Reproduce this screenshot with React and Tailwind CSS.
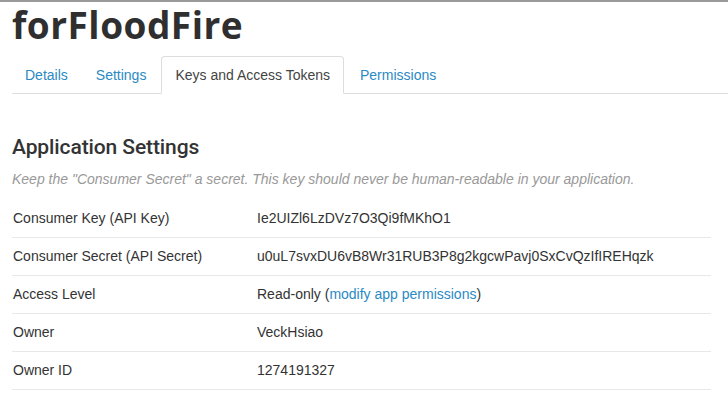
import React from "react";

const rows = [
  ["Consumer Key (API Key)", "Ie2UIZl6LzDVz7O3Qi9fMKhO1"],
  ["Consumer Secret (API Secret)", "u0uL7svxDU6vB8Wr31RUB3P8g2kgcwPavj0SxCvQzIfIREHqzk"],
  ["Access Level", null],
  ["Owner", "VeckHsiao"],
  ["Owner ID", "1274191327"],
];

export default function App() {
  return (
    <div
      className="w-[728px] h-[412px] overflow-hidden bg-white text-[#333]"
      style={{ fontFamily: '"Liberation Sans", Arial, sans-serif' }}
    >
      <div className="h-[2px] bg-[#9a9a9a]" />
      <div className="pl-[12px]">
        <h1
          className="text-[37px] leading-[44px] font-bold tracking-[0.5px] text-[#2f2f2f] mt-[1px]"
          style={{ fontFamily: '"Open Sans", "Liberation Sans", sans-serif' }}
        >
          forFloodFire
        </h1>
        <ul className="flex mt-[9px] border-b border-[#dddddd] text-[14px] leading-5">
          <li className="mr-[2px] mb-[-1px]">
            <span className="block px-[12px] py-[8px] border border-transparent text-[#2a8ac4]">Details</span>
          </li>
          <li className="mr-[2px] mb-[-1px]">
            <span className="block px-[12px] py-[8px] border border-transparent text-[#2a8ac4]">Settings</span>
          </li>
          <li className="mr-[2px] mb-[-1px]">
            <span className="block px-[13px] py-[8px] border border-[#dddddd] border-b-white bg-white rounded-t-[4px] text-[#444]">
              Keys and Access Tokens
            </span>
          </li>
          <li className="mr-[2px] mb-[-1px]">
            <span className="block px-[13px] py-[8px] border border-transparent text-[#2a8ac4]">Permissions</span>
          </li>
        </ul>
        <div className="pr-[17px]">
          <h2
            className="mt-[39px] text-[21px] leading-[28px] font-medium tracking-[-0.1px] text-[#333]"
            style={{ fontFamily: 'Roboto, "Liberation Sans", sans-serif' }}
          >
            Application Settings
          </h2>
          <p className="mt-[8px] text-[14px] leading-[20px] italic text-[#999]">
            Keep the "Consumer Secret" a secret. This key should never be human-readable in your application.
          </p>
          <div className="mt-[10px] text-[14px]">
            {rows.map(([label, value], i) => (
              <div
                key={label}
                className={`flex items-center h-[38px] ${i > 0 ? "border-t border-[#e8e8e8]" : ""}`}
              >
                <div className="w-[245px] pl-[1px]">{label}</div>
                <div>
                  {value !== null ? (
                    value
                  ) : (
                    <>
                      Read-only (<span className="text-[#2a8ac4]">modify app permissions</span>)
                    </>
                  )}
                </div>
              </div>
            ))}
            <div className="border-t border-[#e8e8e8]" />
          </div>
        </div>
      </div>
    </div>
  );
}
